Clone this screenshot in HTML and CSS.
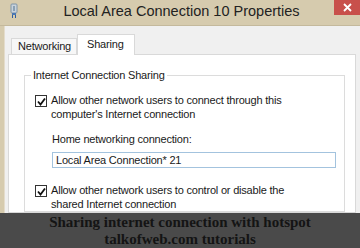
FILE: index.html
```html
<!DOCTYPE html>
<html lang="en">
<head>
    <meta charset="UTF-8">
    <meta name="viewport" content="width=device-width, initial-scale=1.0">
    <title>Local Area Connection 10 Properties</title>
    <link rel="stylesheet" href="styles.css">
</head>
<body>
    <div class="window">
        <div class="titlebar">
            <svg class="app-icon" width="10" height="16" viewBox="0 0 10 16">
                <rect x="2" y="1" width="6" height="9" rx="1" fill="#c9d3dc" stroke="#7f95a8"/>
                <rect x="4" y="3" width="2" height="5" fill="#8aa0b3"/>
                <rect x="3" y="10" width="4" height="2" fill="#4b78b4"/>
                <rect x="3" y="12" width="1" height="3" fill="#2f5e9e"/>
                <rect x="6" y="12" width="1" height="3" fill="#2f5e9e"/>
            </svg>
            <div class="title">Local Area Connection 10 Properties</div>
            <div class="close">
                <svg width="9" height="9" viewBox="0 0 9 9">
                    <path d="M1 1 L8 8 M8 1 L1 8" stroke="#fff" stroke-width="1.8"/>
                </svg>
            </div>
        </div>
        <div class="frame">
            <div class="frame-edge"></div>
            <div class="dialog">
                <div class="tabs">
                    <div class="tab">Networking</div>
                    <div class="tab active">Sharing</div>
                </div>
                <div class="panel">
                    <fieldset class="group">
                        <legend>Internet Connection Sharing</legend>
                        <div class="option">
                            <span class="check">
                                <svg width="9" height="9" viewBox="0 0 9 9">
                                    <path d="M1 4.5 L3.5 7.5 L8 1.5" fill="none" stroke="#111" stroke-width="1.8"/>
                                </svg>
                            </span>
                            <p>Allow other network users to connect through this computer's Internet connection</p>
                        </div>
                        <div class="field">
                            <p>Home networking connection:</p>
                            <div class="select">Local Area Connection* 21</div>
                        </div>
                        <div class="option">
                            <span class="check">
                                <svg width="9" height="9" viewBox="0 0 9 9">
                                    <path d="M1 4.5 L3.5 7.5 L8 1.5" fill="none" stroke="#111" stroke-width="1.8"/>
                                </svg>
                            </span>
                            <p>Allow other network users to control or disable the shared Internet connection</p>
                        </div>
                    </fieldset>
                </div>
            </div>
        </div>
    </div>
    <div class="caption">
        <p>Sharing internet connection with hotspot</p>
        <p>talkofweb.com tutorials</p>
    </div>
</body>
</html>
```

FILE: styles.css
```css
body {
    margin: 0;
    width: 360px;
    height: 248px;
    overflow: hidden;
    display: flex;
    flex-direction: column;
    font-family: "Liberation Sans", Arial, sans-serif;
    font-size: 11px;
    letter-spacing: -0.2px;
    color: #1a1a1a;
    background-color: #f0f0f0;
}
p {
    margin: 0;
}
.window {
    height: 213px;
    flex-shrink: 0;
    overflow: hidden;
    display: flex;
    flex-direction: column;
}
.titlebar {
    height: 25px;
    flex-shrink: 0;
    display: flex;
    background-color: #d6cbae;
    border-bottom: 1px solid #c4b99c;
}
.app-icon {
    margin: 3px 0 0 9px;
}
.title {
    flex: 1;
    text-align: center;
    font-size: 14.5px;
    letter-spacing: 0;
    line-height: 22px;
    color: #222;
    padding-left: 10px;
}
.close {
    width: 26px;
    height: 15px;
    background-color: #c8504b;
    display: flex;
    align-items: center;
    justify-content: center;
}
.frame {
    flex: 1;
    display: flex;
}
.frame-edge {
    width: 4px;
    background-color: #d6cbae;
    border-right: 1px solid #e4dccb;
}
.dialog {
    flex: 1;
    padding: 7px 4px 0 3px;
    display: flex;
    flex-direction: column;
}
.tabs {
    display: flex;
    align-items: flex-end;
    padding-left: 3px;
    height: 21px;
}
.tab {
    height: 15px;
    padding: 0 5px 0 6px;
    line-height: 15px;
    border: 1px solid #d9d9d9;
    border-bottom: none;
    background-color: #f7f7f7;
}
.tab.active {
    height: 20px;
    line-height: 19px;
    padding: 0 10px 0 9px;
    background-color: #fff;
    margin-bottom: -1px;
    position: relative;
}
.panel {
    flex: 1;
    background-color: #fff;
    border: 1px solid #d9d9d9;
    padding: 14px 10px 0 15px;
}
.group {
    margin: 0;
    border: 1px solid #dcdcdc;
    padding: 12px 8px 0 10px;
}
.group legend {
    padding: 0 2px;
    margin-left: -4px;
}
.option {
    display: flex;
    gap: 4px;
    line-height: 14px;
}
.option p {
    width: 240px;
}
.check {
    width: 10px;
    height: 10px;
    flex-shrink: 0;
    margin-top: 2px;
    border: 1px solid #333;
    display: flex;
    align-items: center;
    justify-content: center;
}
.field {
    padding: 11px 0 15px 17px;
    line-height: 14px;
}
.select {
    margin-top: 6px;
    height: 14px;
    line-height: 14px;
    border: 1px solid #a3c3de;
    padding-left: 3px;
}
.caption {
    flex: 1;
    background-color: #4a4a4a;
    text-align: center;
    font-family: "Liberation Serif", "DejaVu Serif", serif;
    font-weight: bold;
    font-size: 15px;
    letter-spacing: 0;
    line-height: 17px;
    color: #141414;
    padding-top: 1px;
}
```
